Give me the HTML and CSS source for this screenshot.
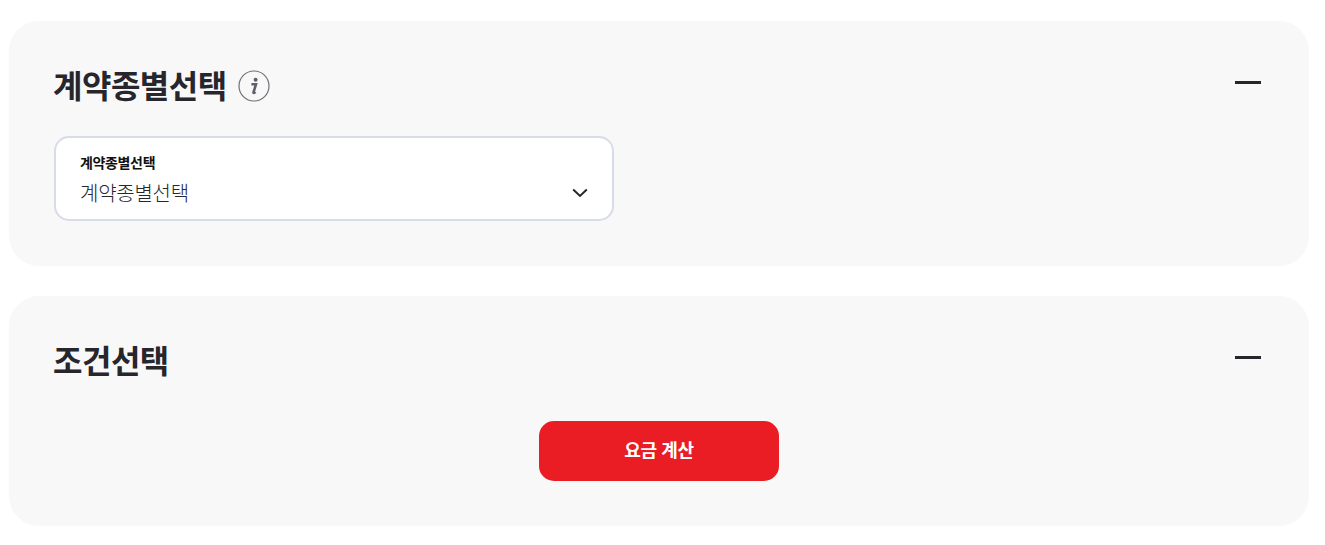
FILE: index.html
```html
<!DOCTYPE html>
<html lang="ko">
<head>
  <meta charset="UTF-8" />
  <meta name="viewport" content="width=device-width, initial-scale=1.0" />
  <title>요금 계산</title>
  <link rel="stylesheet" href="styles.css">
</head>
<body>
  <!-- 계약종별선택 -->
  <section class="panel">
    <div class="panel-head">
      <h2>계약종별선택</h2>
      <svg class="info-icon" width="32" height="32" viewBox="0 0 32 32">
        <circle cx="16" cy="16" r="15" fill="none" stroke="#6f7177" stroke-width="1.2" />
        <circle cx="17.6" cy="9.8" r="2" fill="#5f6168" />
        <path d="M13.4 14.2h4.600l-2.500 8.200c-.2.7.5.9 2-.3" fill="none" stroke="#5f6168" stroke-width="2.600" />
      </svg>
      <span class="collapse"></span>
    </div>
    <div class="select-box">
      <div class="select-label">계약종별선택</div>
      <div class="select-row">
        <span class="select-value">계약종별선택</span>
        <svg class="chevron" width="16" height="10" viewBox="0 0 16 10">
          <path d="M1.2 1.600L8 8l6.800-6.400" fill="none" stroke="#26262c" stroke-width="2" />
        </svg>
      </div>
    </div>
  </section>

  <!-- 조건선택 -->
  <section class="panel">
    <div class="panel-head">
      <h2>조건선택</h2>
      <span class="collapse"></span>
    </div>
    <div class="actions">
      <button class="calc-btn">요금 계산</button>
    </div>
  </section>
</body>
</html>
```

FILE: styles.css
```css
* { box-sizing: border-box; margin: 0; padding: 0; }
html, body { width: 100%; height: 100%; }
body {
  font-family: "Noto Sans CJK KR", "Noto Sans", sans-serif;
  background: #fff;
  color: #26262c;
  overflow: hidden;
  padding: 21px 16px 0 9px;
}

.panel {
  background: #f8f8f8;
  border-radius: 30px;
  padding: 45px 48px 45px 45px;
  margin-bottom: 30px;
}

.panel-head {
  display: flex;
  align-items: center;
  height: 40px;
}
.panel-head h2 {
  font-size: 32px;
  line-height: 36px;
  margin-left: -1px;
  margin-bottom: 5px;
  font-weight: 700;
  letter-spacing: -0.5px;
}
.info-icon { margin-left: 11px; }
.collapse {
  width: 26px;
  height: 3px;
  background: #26262c;
  margin-left: auto;
  margin-bottom: 8px;
}

.select-box {
  width: 560px;
  height: 85px;
  margin-top: 30px;
  padding: 14px 24px 0 24px;
  background: #fff;
  border: 2px solid #d8dce8;
  border-radius: 15px;
}
.select-label {
  font-size: 14px;
  line-height: 20px;
  font-weight: 700;
  color: #111;
  letter-spacing: -0.35px;
}
.select-row {
  display: flex;
  align-items: center;
  justify-content: space-between;
  height: 30px;
  margin-top: 5px;
}
.select-value {
  font-size: 20px;
  font-weight: 300;
  color: #26262c;
  letter-spacing: -0.25px;
}
.chevron { margin-top: 1px; }

.actions {
  display: flex;
  justify-content: center;
  margin-top: 40px;
  padding-left: 3px;
}
.calc-btn {
  width: 240px;
  height: 60px;
  border: none;
  border-radius: 15px;
  background: #ea1d24;
  color: #fff;
  font-family: inherit;
  font-size: 18px;
  font-weight: 700;
  letter-spacing: -0.4px;
  padding-bottom: 5px;
}
```
